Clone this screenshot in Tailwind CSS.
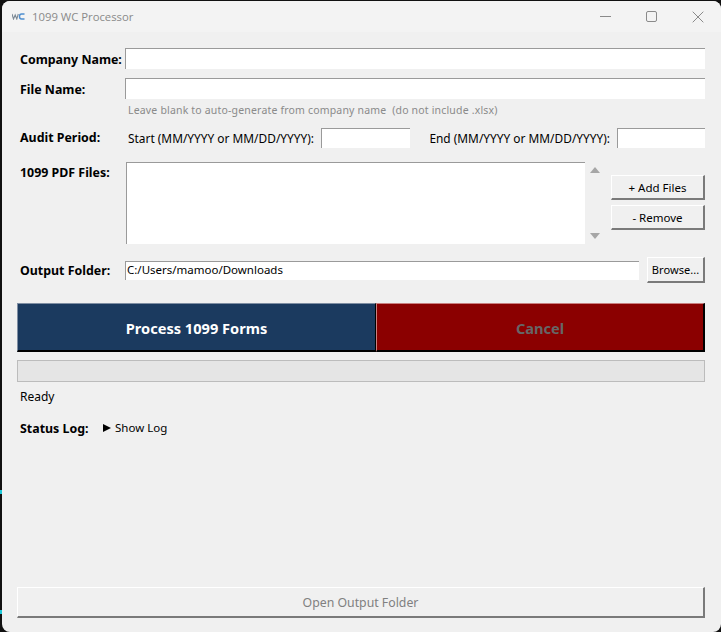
<!DOCTYPE html>
<html>
<head>
<meta charset="utf-8">
<script src="https://cdn.jsdelivr.net/npm/@tailwindcss/browser@4"></script>
</head>
<body class="bg-black m-0 overflow-hidden">
<div class="relative w-[721px] h-[632px] bg-[#111] overflow-hidden">
<div class="absolute left-0 top-[490px] w-[2px] h-[4px] bg-[#1cc8d8]"></div>
<div class="absolute left-0 top-[610px] w-[2px] h-[4px] bg-[#1cc8d8]"></div>
<div class="ml-[2px] mt-[1px] w-[719px] h-[631px] bg-[#f0f0f0] rounded-[8px] flex flex-col font-['Noto_Sans',sans-serif] text-[12px] leading-[16px] text-black overflow-hidden">
  <!-- title bar -->
  <div class="h-[31px] shrink-0 bg-[#f3f3f3] flex items-center pl-[10px] text-[#8a8a8a]">
    <svg width="13" height="7" viewBox="0 0 13 7" class="shrink-0"><path d="M0 1l1.5 5L3.2 2l1.6 4L6.3 1" fill="none" stroke="#7d8a96" stroke-width="1.1"/><path d="M12.5 1H9.5Q7.5 1 7.5 3.5T9.5 6h3" fill="none" stroke="#4f8fd0" stroke-width="1.4"/></svg>
    <span class="ml-[7px] text-[11.3px] font-['Open_Sans',sans-serif]">1099 WC Processor</span>
    <div class="ml-auto flex items-center gap-[35px] pr-[17px]">
      <svg width="11" height="1" viewBox="0 0 11 1"><rect width="11" height="1" fill="#8a8a8a"/></svg>
      <svg width="11" height="11" viewBox="0 0 11 11"><rect x=".5" y=".5" width="10" height="10" rx="1.5" fill="none" stroke="#8a8a8a"/></svg>
      <svg width="12" height="12" viewBox="0 0 12 12"><path d="M.7.7l10.6 10.6M11.3.7L.7 11.3" stroke="#8a8a8a" stroke-width="1"/></svg>
    </div>
  </div>

  <div class="flex-1 flex flex-col pl-[15px] pr-[16px] pb-[14px] pt-[16px]">
    <!-- company -->
    <div class="flex items-center h-[21px] pl-[3px]">
      <span class="w-[105px] text-[12.4px] font-bold shrink-0 whitespace-nowrap translate-y-[1px]">Company Name:</span>
      <div class="flex-1 h-[21px] bg-white border-t border-l border-[#9a9a9a]"></div>
    </div>
    <div class="flex items-center h-[21px] pl-[3px] mt-[9px]">
      <span class="w-[105px] text-[12.4px] font-bold shrink-0 translate-y-[1px]">File Name:</span>
      <div class="flex-1 h-[21px] bg-white border-t border-l border-[#9a9a9a]"></div>
    </div>
    <div class="pl-[111px] mt-[3px] h-[16px] text-[10.5px] text-[#8a8a8a] tracking-[0.18px] whitespace-pre">Leave blank to auto-generate from company name  (do not include .xlsx)</div>

    <!-- audit -->
    <div class="flex items-center h-[20px] mt-[10px] pl-[3px]">
      <span class="w-[108px] text-[12.4px] font-bold shrink-0">Audit Period:</span>
      <span class="text-[11.9px] whitespace-nowrap">Start (MM/YYYY or MM/DD/YYYY):</span>
      <div class="ml-[7px] w-[89px] h-[20px] shrink-0 bg-white border-t border-l border-[#9a9a9a]"></div>
      <span class="ml-auto text-[11.9px] whitespace-nowrap">End (MM/YYYY or MM/DD/YYYY):</span>
      <div class="ml-[7px] w-[88px] h-[20px] shrink-0 bg-white border-t border-l border-[#9a9a9a]"></div>
    </div>

    <!-- files -->
    <div class="flex items-start h-[82px] mt-[14px] pl-[3px]">
      <span class="w-[106px] text-[12.4px] font-bold shrink-0 mt-[3px]">1099 PDF Files:</span>
      <div class="w-[459px] h-[82px] shrink-0 bg-white border-t border-l border-[#9a9a9a]"></div>
      <div class="w-[20px] h-[82px] shrink-0 flex flex-col items-center justify-between py-[5px]">
        <svg width="10" height="6" viewBox="0 0 10 6"><path d="M5 0l5 6H0z" fill="#a6a6a6"/></svg>
        <svg width="10" height="6" viewBox="0 0 10 6"><path d="M5 6L0 0h10z" fill="#a6a6a6"/></svg>
      </div>
      <div class="ml-auto w-[94px] flex flex-col gap-[5px] mt-[13px] text-[11.5px]">
        <div class="h-[25px] bg-[#f0f0f0] border-t border-l border-white border-r-2 border-b-2 border-r-[#7a7a7a] border-b-[#7a7a7a] flex items-center justify-center pt-[2px]">+ Add Files</div>
        <div class="h-[25px] bg-[#f0f0f0] border-t border-l border-white border-r-2 border-b-2 border-r-[#7a7a7a] border-b-[#7a7a7a] flex items-center justify-center pt-[2px]">- Remove</div>
      </div>
    </div>

    <!-- output -->
    <div class="flex items-center h-[26px] mt-[13px] pl-[3px]">
      <span class="w-[105px] text-[12.4px] font-bold shrink-0 translate-y-[1px]">Output Folder:</span>
      <div class="w-[514px] h-[19px] shrink-0 bg-white border-t border-l border-[#9a9a9a] pl-[1px] text-[11.5px] leading-[16px]">C:/Users/mamoo/Downloads</div>
      <div class="ml-auto w-[58px] h-[26px] text-[11.1px] bg-[#f0f0f0] border-t border-l border-white border-r-2 border-b-2 border-r-[#7a7a7a] border-b-[#7a7a7a] flex items-center justify-center">Browse...</div>
    </div>

    <!-- actions -->
    <div class="flex h-[49px] mt-[20px] text-[14.6px] font-bold">
      <div class="w-[359px] shrink-0 bg-[#1b3a5f] text-white border-t border-l border-[#7f8ea3] border-b-2 border-b-black border-r border-r-black flex items-center justify-center pt-[1px]">Process 1099 Forms</div>
      <div class="flex-1 bg-[#8b0000] text-[#666666] border-t border-l border-[#c98080] border-b-2 border-b-black border-r-2 border-r-black flex items-center justify-center pt-[1px]">Cancel</div>
    </div>

    <!-- progress -->
    <div class="h-[22px] mt-[8px] bg-[#e5e5e5] border border-[#bcbcbc]"></div>

    <div class="pl-[3px] mt-[7px] h-[16px]">Ready</div>

    <div class="flex items-center pl-[3px] mt-[15px] h-[16px]">
      <span class="w-[86px] text-[12.4px] font-bold shrink-0 translate-y-[1px]">Status Log:</span>
      <svg width="8" height="8" viewBox="0 0 8 8" class="shrink-0 -ml-[3px]"><path d="M0 0l8 4-8 4z" fill="#000"/></svg>
      <span class="ml-[4px] text-[11.5px] whitespace-nowrap">Show Log</span>
    </div>

    <div class="mt-auto h-[31px] text-[12.3px] bg-[#f0f0f0] border-t border-l border-white border-r-2 border-b-2 border-r-[#7a7a7a] border-b-[#7a7a7a] flex items-center justify-center text-[#808080] pt-[2px]">Open Output Folder</div>
  </div>
</div>
</div>
</body>
</html>
